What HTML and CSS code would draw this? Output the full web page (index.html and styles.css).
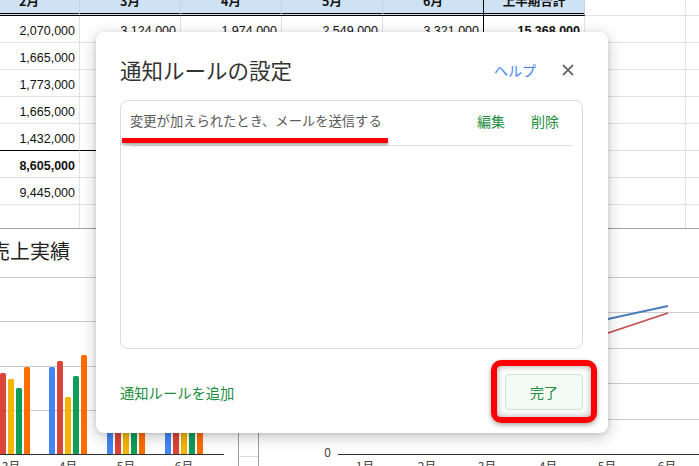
FILE: index.html
```html
<!DOCTYPE html>
<html lang="ja">
<head>
<meta charset="utf-8">
<title>通知ルールの設定</title>
<link rel="stylesheet" href="styles.css">
</head>
<body>
<div class="sheet">
  <div class="top">
    <div class="grid">
      <div class="c h">2月</div><div class="c h">3月</div><div class="c h">4月</div><div class="c h">5月</div><div class="c h k">6月</div><div class="c h">上半期合計</div><div class="c hx"></div><div class="c hx"></div>

      <div class="c n">2,070,000</div><div class="c n">3,124,000</div><div class="c n">1,974,000</div><div class="c n">2,549,000</div><div class="c n k">3,321,000</div><div class="c n b">15,368,000</div><div class="c"></div><div class="c"></div>

      <div class="c n">1,665,000</div><div class="c n"></div><div class="c n"></div><div class="c n"></div><div class="c n k"></div><div class="c n"></div><div class="c"></div><div class="c"></div>

      <div class="c n">1,773,000</div><div class="c n"></div><div class="c n"></div><div class="c n"></div><div class="c n k"></div><div class="c n"></div><div class="c"></div><div class="c"></div>

      <div class="c n">1,665,000</div><div class="c n"></div><div class="c n"></div><div class="c n"></div><div class="c n k"></div><div class="c n"></div><div class="c"></div><div class="c"></div>

      <div class="c n s">1,432,000</div><div class="c n s"></div><div class="c n s"></div><div class="c n s"></div><div class="c n k s"></div><div class="c n s"></div><div class="c"></div><div class="c"></div>

      <div class="c n b">8,605,000</div><div class="c n"></div><div class="c n"></div><div class="c n"></div><div class="c n k"></div><div class="c n"></div><div class="c"></div><div class="c"></div>

      <div class="c n">9,445,000</div><div class="c n"></div><div class="c n"></div><div class="c n"></div><div class="c n k"></div><div class="c n"></div><div class="c"></div><div class="c"></div>

      <div class="c n"></div><div class="c n"></div><div class="c n"></div><div class="c n"></div><div class="c n k"></div><div class="c n"></div><div class="c"></div><div class="c"></div>
    </div>
  </div>

  <div class="charts">
    <div class="chart chart-left">
      <svg width="238" height="237" viewBox="0 0 238 237" class="chart-svg">
        <text x="-10" y="21" class="ch-title" dominant-baseline="central">売上実績</text>
        <g stroke="#cccccc" stroke-width="1">
          <line x1="0" y1="48.5" x2="224" y2="48.5"/>
          <line x1="0" y1="92.5" x2="224" y2="92.5"/>
          <line x1="0" y1="137.5" x2="224" y2="137.5"/>
          <line x1="0" y1="181.5" x2="224" y2="181.5"/>
        </g>
        <!-- 3月 -->
        <path fill="#db4437" d="M0 225V145.5Q0 144 1.5 144H4.5Q6 144 6 145.5V225Z"/>
        <path fill="#f4b400" d="M8 225V151.5Q8 150 9.5 150H12.5Q14 150 14 151.5V225Z"/>
        <path fill="#0f9d58" d="M16 225V160.5Q16 159 17.5 159H20.5Q22 159 22 160.5V225Z"/>
        <path fill="#ff6d00" d="M24 225V139.5Q24 138 25.5 138H28.5Q30 138 30 139.5V225Z"/>
        <!-- 4月 -->
        <path fill="#4285f4" d="M49 225V139.5Q49 138 50.5 138H53.5Q55 138 55 139.5V225Z"/>
        <path fill="#db4437" d="M57 225V133.5Q57 132 58.5 132H61.5Q63 132 63 133.5V225Z"/>
        <path fill="#f4b400" d="M65 225V169.5Q65 168 66.5 168H69.5Q71 168 71 169.5V225Z"/>
        <path fill="#0f9d58" d="M73 225V148.5Q73 147 74.5 147H77.5Q79 147 79 148.5V225Z"/>
        <path fill="#ff6d00" d="M81 225V127.5Q81 126 82.5 126H85.5Q87 126 87 127.5V225Z"/>
        <!-- 5月 -->
        <path fill="#4285f4" d="M107 225V151.5Q107 150 108.5 150H111.5Q113 150 113 151.5V225Z"/>
        <path fill="#db4437" d="M115 225V161.5Q115 160 116.5 160H119.5Q121 160 121 161.5V225Z"/>
        <path fill="#f4b400" d="M123 225V171.5Q123 170 124.5 170H127.5Q129 170 129 171.5V225Z"/>
        <path fill="#0f9d58" d="M131 225V156.5Q131 155 132.5 155H135.5Q137 155 137 156.5V225Z"/>
        <path fill="#ff6d00" d="M139 225V141.5Q139 140 140.5 140H143.5Q145 140 145 141.5V225Z"/>
        <!-- 6月 -->
        <path fill="#4285f4" d="M165 225V121.5Q165 120 166.5 120H169.5Q171 120 171 121.5V225Z"/>
        <path fill="#db4437" d="M173 225V131.5Q173 130 174.5 130H177.5Q179 130 179 131.5V225Z"/>
        <path fill="#f4b400" d="M181 225V161.5Q181 160 182.5 160H185.5Q187 160 187 161.5V225Z"/>
        <path fill="#0f9d58" d="M189 225V141.5Q189 140 190.5 140H193.5Q195 140 195 141.5V225Z"/>
        <path fill="#ff6d00" d="M197 225V111.5Q197 110 198.5 110H201.5Q203 110 203 111.5V225Z"/>
        <line x1="0" y1="225.5" x2="224" y2="225.5" stroke="#333333" stroke-width="1"/>
        <g class="ax">
          <text x="11" y="242" text-anchor="middle">3月</text>
          <text x="68" y="242" text-anchor="middle">4月</text>
          <text x="126" y="242" text-anchor="middle">5月</text>
          <text x="184" y="242" text-anchor="middle">6月</text>
        </g>
      </svg>
    </div>
    <div class="gap-cells"><div class="gap-row"></div></div>
    <div class="chart chart-right">
      <svg width="440" height="237" viewBox="0 0 440 237" class="chart-svg">
        <g stroke="#cccccc" stroke-width="1">
          <line x1="80" y1="48.5" x2="440" y2="48.5"/>
          <line x1="80" y1="83.5" x2="440" y2="83.5"/>
          <line x1="80" y1="119.5" x2="440" y2="119.5"/>
          <line x1="80" y1="154.5" x2="440" y2="154.5"/>
          <line x1="80" y1="190.5" x2="440" y2="190.5"/>
        </g>
        <polyline fill="none" stroke="#4a7ebb" stroke-width="1.8" points="106,150 168,131 228,118 289,103 349,90 409,77"/>
        <polyline fill="none" stroke="#c0504d" stroke-width="1.8" points="106,160 168,145 228,135 289,124 349,104 409,84"/>
        <line x1="79" y1="225.5" x2="440" y2="225.5" stroke="#333333" stroke-width="1"/>
        <g class="ax">
          <text x="72" y="228" text-anchor="end">0</text>
          <text x="106" y="242" text-anchor="middle">1月</text>
          <text x="168" y="242" text-anchor="middle">2月</text>
          <text x="228" y="242" text-anchor="middle">3月</text>
          <text x="289" y="242" text-anchor="middle">4月</text>
          <text x="348" y="242" text-anchor="middle">5月</text>
          <text x="408" y="242" text-anchor="middle">6月</text>
        </g>
      </svg>
    </div>
  </div>

  <div class="dialog">
    <div class="dlg-head">
      <div class="dlg-title">通知ルールの設定</div>
      <a class="help">ヘルプ</a>
      <span class="close">
        <svg width="12" height="12" viewBox="0 0 12 12"><path d="M1 1L11 11M11 1L1 11" stroke="#6b6b6b" stroke-width="1.8" fill="none"/></svg>
      </span>
    </div>
    <div class="rules">
      <div class="rule">
        <span class="rule-text">変更が加えられたとき、メールを送信する</span>
        <a class="act">編集</a>
        <a class="act">削除</a>
      </div>
    </div>
    <div class="dlg-foot">
      <a class="add">通知ルールを追加</a>
      <button class="done">完了</button>
    </div>
  </div>

  <div class="mark-line"></div>
  <div class="mark-box"></div>
</div>
</body>
</html>
```

FILE: styles.css
```css
* { box-sizing: border-box; }
html, body { margin: 0; padding: 0; background: #fff; }
body {
  font-family: "Noto Sans CJK JP", "Noto Sans", sans-serif;
  width: 699px;
  height: 466px;
  overflow: hidden;
}
.sheet {
  position: relative;
  width: 699px;
  height: 466px;
  overflow: hidden;
}

/* ---------- spreadsheet ---------- */
.top {
  height: 228px;
  overflow: hidden;
}
.grid {
  display: grid;
  grid-template-columns: repeat(8, 101px);
  grid-template-rows: 28px;
  grid-auto-rows: 27px;
  margin: -12px 0 0 -21px;
  width: 808px;
}
.c {
  border-right: 1px solid #e2e2e2;
  border-bottom: 1px solid #e2e2e2;
  font-family: "Liberation Sans", "Noto Sans CJK JP", sans-serif;
  font-size: 12.5px;
  color: #111;
  line-height: 26px;
  white-space: nowrap;
  overflow: hidden;
}
.h {
  background: #cfe2f3;
  border-right-color: #bfd2e6;
  border-bottom: 3px double #000;
  font-family: "Noto Sans CJK JP", sans-serif;
  font-weight: bold;
  text-align: center;
  font-size: 12.5px;
  line-height: 25px;
}
.hx { background: #fff; }
.n { text-align: right; padding: 2px 4px 0 0; }
.b { font-weight: bold; }
.k { border-right-color: #000; }
.s { border-bottom-color: #000; }

/* ---------- charts ---------- */
.charts {
  display: flex;
  height: 238px;
  border-top: 1px solid #9e9e9e;
}
.chart { background: #fff; height: 237px; }
.chart-left {
  width: 239px;
  border-right: 1px solid #a0a0a0;
}
.chart-right {
  flex: 1;
  border-left: 1px solid #a0a0a0;
}
.chart-svg { display: block; overflow: hidden; }
.gap-cells { width: 19px; }
.gap-row { height: 228px; border-bottom: 1px solid #dcdcdc; }
.ch-title {
  font-family: "Noto Sans CJK JP", sans-serif;
  font-size: 20px;
  fill: #222;
}
.ax text {
  font-family: "Noto Sans CJK JP", sans-serif;
  font-size: 12px;
  fill: #444;
}

/* ---------- dialog ---------- */
.dialog {
  position: absolute;
  left: 96px;
  top: 32px;
  width: 512px;
  height: 401px;
  background: #fff;
  border-radius: 8px;
  box-shadow: 0 4px 16px rgba(0, 0, 0, 0.22), 0 1px 4px rgba(0, 0, 0, 0.12);
  padding: 24px 25px 23px 24px;
  display: flex;
  flex-direction: column;
}
.dlg-head {
  display: flex;
  align-items: center;
  height: 28px;
}
.dlg-title {
  flex: 1;
  font-size: 21.5px;
  line-height: 28px;
  color: #333;
}
.help {
  font-size: 14px;
  color: #4285f4;
  margin-right: 20px;
  cursor: pointer;
}
.close {
  width: 24px;
  height: 24px;
  margin-right: 3px;
  display: flex;
  align-items: center;
  justify-content: center;
}
.rules {
  margin-top: 16px;
  height: 249px;
  border: 1px solid #dadce0;
  border-radius: 8px;
}
.rule {
  display: flex;
  align-items: center;
  margin: 0 9px 0 9px;
  padding: 9px 0 13px;
  border-bottom: 1px solid #e0e0e0;
  line-height: 22px;
}
.rule-text {
  flex: 1;
  font-size: 13.3px;
  color: #5a5a5a;
}
.act {
  font-size: 14px;
  color: #1e8e3e;
  padding: 0 13px;
  cursor: pointer;
}
.act:last-child { padding-right: 14px; }
.dlg-foot {
  margin-top: 25px;
  height: 36px;
  display: flex;
  align-items: center;
  justify-content: space-between;
}
.add {
  font-size: 14.3px;
  color: #1e8e3e;
  cursor: pointer;
}
.done {
  width: 78px;
  height: 36px;
  border: 1px solid #c8e6d0;
  background: #f4faf6;
  border-radius: 4px;
  color: #1e8e3e;
  font-family: "Noto Sans CJK JP", sans-serif;
  font-size: 14px;
  padding: 0;
}

/* ---------- annotations ---------- */
.mark-line {
  position: absolute;
  left: 122px;
  top: 138px;
  width: 266px;
  height: 5px;
  background: #ff0000;
  box-shadow: 0 2px 3px rgba(0, 0, 0, 0.35);
}
.mark-box {
  position: absolute;
  left: 491px;
  top: 360px;
  width: 106px;
  height: 63px;
  border: 6px solid #ff0000;
  border-radius: 10px;
  box-shadow: 0 2px 5px rgba(0, 0, 0, 0.35), inset 0 0 7px rgba(0, 0, 0, 0.35);
}
```
